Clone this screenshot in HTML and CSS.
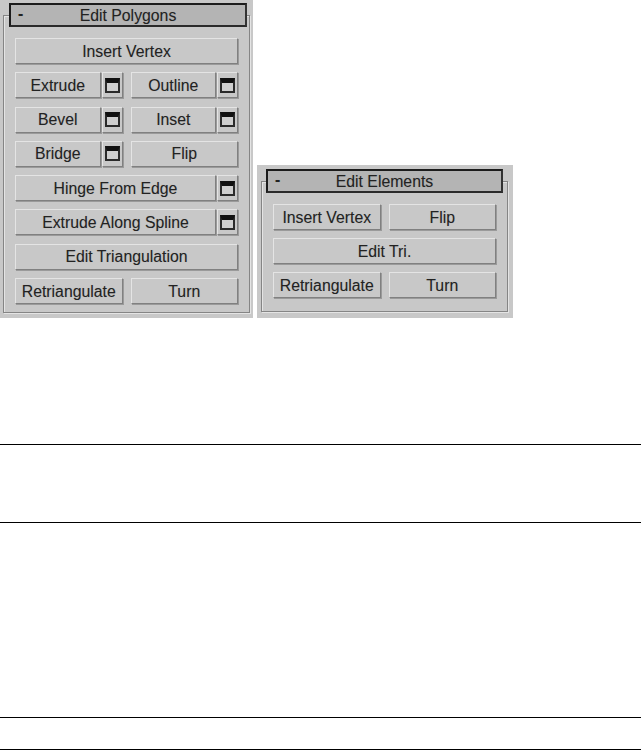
FILE: index.html
```html
<!DOCTYPE html>
<html lang="en">
<head>
  <meta charset="UTF-8" />
  <title>Edit Polygons</title>
  <link rel="stylesheet" href="styles.css">
</head>
<body>

  <div class="figure">

    <!-- Edit Polygons rollout -->
    <div class="panel panel-poly">
      <div class="title"><span class="minus">-</span><span class="title-text">Edit Polygons</span></div>
      <div class="group">
        <div class="row"><button class="btn grow">Insert Vertex</button></div>
        <div class="row">
          <div class="pair">
            <button class="btn grow">Extrude</button>
            <button class="btn opt"><span class="win"></span></button>
          </div>
          <div class="pair">
            <button class="btn grow">Outline</button>
            <button class="btn opt"><span class="win"></span></button>
          </div>
        </div>
        <div class="row">
          <div class="pair">
            <button class="btn grow">Bevel</button>
            <button class="btn opt"><span class="win"></span></button>
          </div>
          <div class="pair">
            <button class="btn grow">Inset</button>
            <button class="btn opt"><span class="win"></span></button>
          </div>
        </div>
        <div class="row">
          <div class="pair">
            <button class="btn grow">Bridge</button>
            <button class="btn opt"><span class="win"></span></button>
          </div>
          <div class="pair"><button class="btn grow">Flip</button></div>
        </div>
        <div class="row">
          <div class="pair">
            <button class="btn grow">Hinge From Edge</button>
            <button class="btn opt"><span class="win"></span></button>
          </div>
        </div>
        <div class="row">
          <div class="pair">
            <button class="btn grow">Extrude Along Spline</button>
            <button class="btn opt"><span class="win"></span></button>
          </div>
        </div>
        <div class="row"><button class="btn grow">Edit Triangulation</button></div>
        <div class="row">
          <div class="pair"><button class="btn grow">Retriangulate</button></div>
          <div class="pair"><button class="btn grow">Turn</button></div>
        </div>
      </div>
    </div>

    <!-- Edit Elements rollout -->
    <div class="panel panel-elem">
      <div class="title"><span class="minus">-</span><span class="title-text">Edit Elements</span></div>
      <div class="group">
        <div class="row">
          <div class="pair"><button class="btn grow">Insert Vertex</button></div>
          <div class="pair"><button class="btn grow">Flip</button></div>
        </div>
        <div class="row"><button class="btn grow">Edit Tri.</button></div>
        <div class="row">
          <div class="pair"><button class="btn grow">Retriangulate</button></div>
          <div class="pair"><button class="btn grow">Turn</button></div>
        </div>
      </div>
    </div>

  </div>

  <!-- empty table rules below the figure -->
  <div class="rules">
    <div class="rule rule-a"></div>
    <div class="rule rule-b"></div>
    <div class="rule rule-c"></div>
    <div class="rule rule-d"></div>
  </div>

</body>
</html>
```

FILE: styles.css
```css
html, body { margin: 0; padding: 0; background: #fff; }
body { height: 750px; overflow: hidden; font-family: "Liberation Sans", Arial, sans-serif; }

.figure { display: flex; align-items: flex-end; gap: 4px; height: 318px; }

.panel { background: #c8c8c8; box-sizing: border-box; padding: 3px 3px 5px; }
.panel-poly { width: 253px; height: 318px; }
.panel-elem { width: 256px; height: 153px; padding: 4px 5px 5px 4px; }

.title { position: relative; z-index: 1; display: flex; align-items: center; justify-content: center; height: 24px; box-sizing: border-box; margin: 0 3px 0 6px; padding-top: 1px; background: #b4b4b4; border: 2px solid #1c1c1c; border-right-color: #333; border-bottom-color: #2a2a2a; font-size: 15.8px; color: #222; text-shadow: 0 0 1px rgba(0,0,0,.15); }
.panel-elem .title { margin: 0 5px; }
.minus { position: absolute; left: 7px; top: 0; font-weight: bold; }

.group { margin-top: -12px; box-sizing: border-box; border: 1px solid #858585; box-shadow: 1px 1px 0 #e4e4e4, inset 1px 1px 0 #e4e4e4; display: flex; flex-direction: column; gap: 7.3px; padding: 22px 11px 0; height: 298px; }
.panel-elem .group { height: 131px; gap: 7px; }

.row { display: flex; gap: 8px; height: 27px; }
.pair { display: flex; flex: 1; gap: 1px; min-width: 0; }

.btn { display: flex; align-items: center; justify-content: center; margin: 0; padding: 1px 0 0; height: 26px; box-sizing: border-box; background: #c8c8c8; border: 1px solid; border-color: #e4e4e4 #808080 #808080 #e4e4e4; box-shadow: 1px 1px 0 #9a9a9a; font: 15.8px "Liberation Sans", Arial, sans-serif; color: #222; text-shadow: 0 0 1px rgba(0,0,0,.15); white-space: nowrap; }
.grow { flex: 1; min-width: 0; }
.opt { width: 21px; flex: none; padding: 0; }
.win { display: block; width: 15px; height: 15px; box-sizing: border-box; border: 2px solid #2a2a2a; border-top: 5px solid #111; background: #cfcfcf; }

.rules { margin-top: 126px; }
.rule { border-top: 1px solid #000; }
.rule-a { height: 77px; }
.rule-b { height: 194px; }
.rule-c { height: 31px; }
.rule-d { height: 0; }
```
